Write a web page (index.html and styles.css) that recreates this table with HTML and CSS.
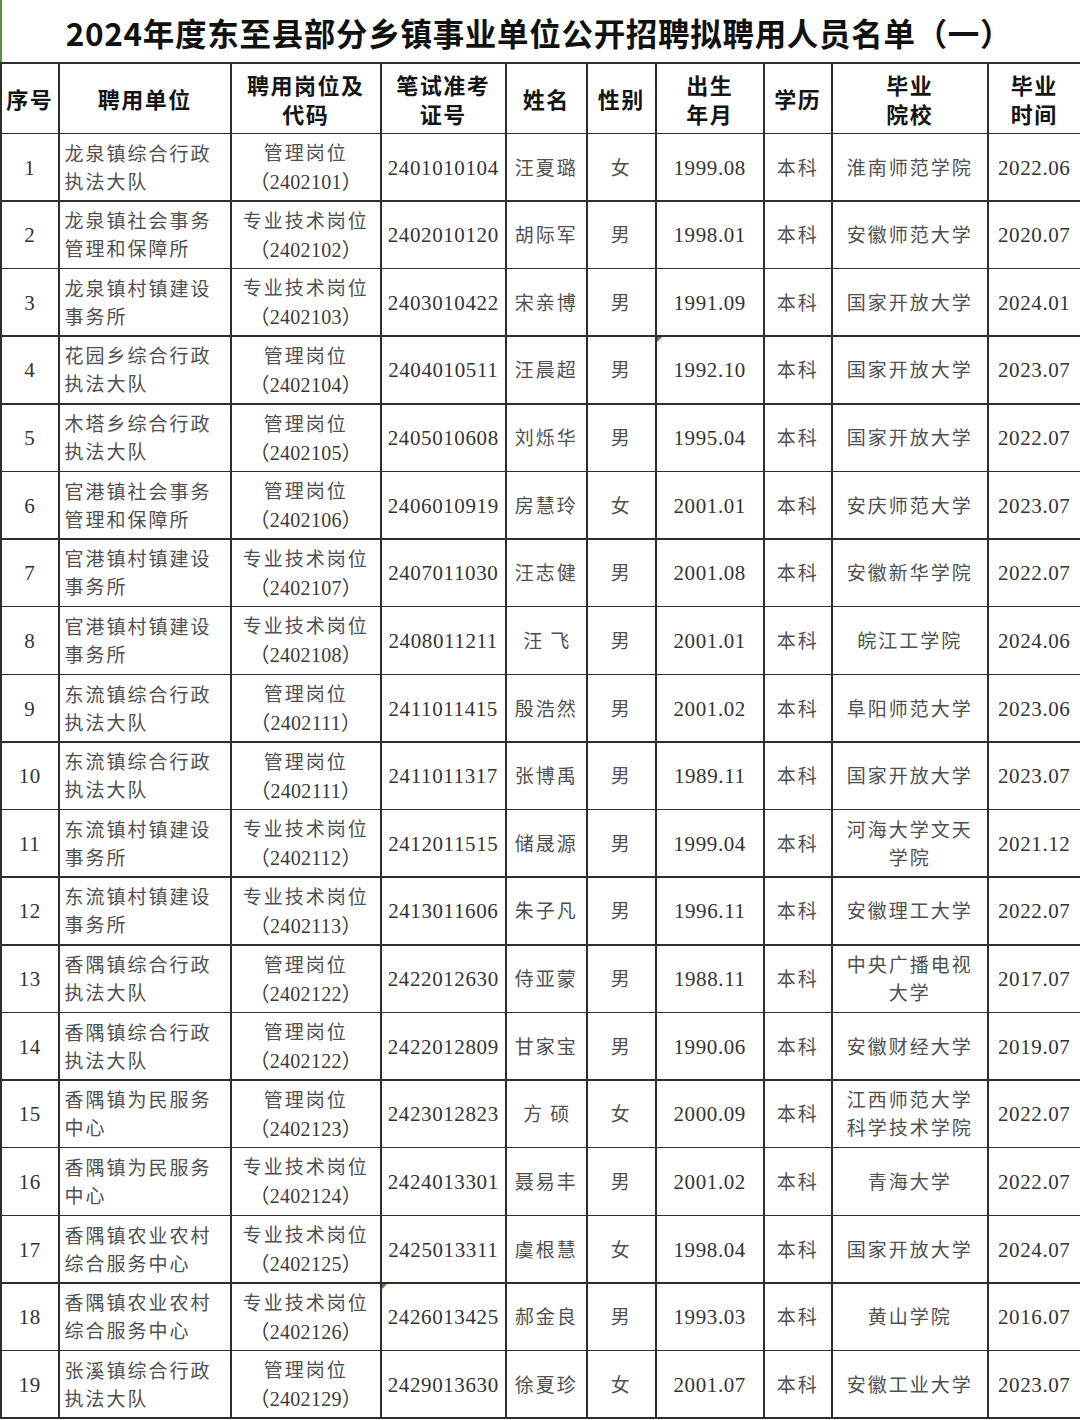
FILE: index.html
```html
<!DOCTYPE html>
<html lang="zh-CN">
<head>
<meta charset="utf-8">
<title>2024年度东至县部分乡镇事业单位公开招聘拟聘用人员名单（一）</title>
<link rel="stylesheet" href="styles.css">
</head>
<body>
<div class="page">
  <div class="title">2024年度东至县部分乡镇事业单位公开招聘拟聘用人员名单（一）</div>
  <div class="grid">
    <div class="h">序号</div>
    <div class="h">聘用单位</div>
    <div class="h">聘用岗位及<br>代码</div>
    <div class="h">笔试准考<br>证号</div>
    <div class="h">姓名</div>
    <div class="h">性别</div>
    <div class="h">出生<br>年月</div>
    <div class="h">学历</div>
    <div class="h">毕业<br>院校</div>
    <div class="h">毕业<br>时间</div>

    <div class="c num">1</div><div class="c unit">龙泉镇综合行政<br>执法大队</div><div class="c pos"><div>管理岗位<br><span class="code">（2402101）</span></div></div><div class="c num">2401010104</div><div class="c">汪夏璐</div><div class="c">女</div><div class="c num">1999.08</div><div class="c">本科</div><div class="c">淮南师范学院</div><div class="c num">2022.06</div>

    <div class="c num">2</div><div class="c unit">龙泉镇社会事务<br>管理和保障所</div><div class="c pos"><div>专业技术岗位<br><span class="code">（2402102）</span></div></div><div class="c num">2402010120</div><div class="c">胡际军</div><div class="c">男</div><div class="c num">1998.01</div><div class="c">本科</div><div class="c">安徽师范大学</div><div class="c num">2020.07</div>

    <div class="c num">3</div><div class="c unit">龙泉镇村镇建设<br>事务所</div><div class="c pos"><div>专业技术岗位<br><span class="code">（2402103）</span></div></div><div class="c num">2403010422</div><div class="c">宋亲博</div><div class="c">男</div><div class="c num">1991.09</div><div class="c">本科</div><div class="c">国家开放大学</div><div class="c num">2024.01</div>

    <div class="c num">4</div><div class="c unit">花园乡综合行政<br>执法大队</div><div class="c pos"><div>管理岗位<br><span class="code">（2402104）</span></div></div><div class="c num">2404010511</div><div class="c">汪晨超</div><div class="c">男</div><div class="c num flag">1992.10</div><div class="c">本科</div><div class="c">国家开放大学</div><div class="c num">2023.07</div>

    <div class="c num">5</div><div class="c unit">木塔乡综合行政<br>执法大队</div><div class="c pos"><div>管理岗位<br><span class="code">（2402105）</span></div></div><div class="c num">2405010608</div><div class="c">刘烁华</div><div class="c">男</div><div class="c num">1995.04</div><div class="c">本科</div><div class="c">国家开放大学</div><div class="c num">2022.07</div>

    <div class="c num">6</div><div class="c unit">官港镇社会事务<br>管理和保障所</div><div class="c pos"><div>管理岗位<br><span class="code">（2402106）</span></div></div><div class="c num">2406010919</div><div class="c">房慧玲</div><div class="c">女</div><div class="c num">2001.01</div><div class="c">本科</div><div class="c">安庆师范大学</div><div class="c num">2023.07</div>

    <div class="c num">7</div><div class="c unit">官港镇村镇建设<br>事务所</div><div class="c pos"><div>专业技术岗位<br><span class="code">（2402107）</span></div></div><div class="c num">2407011030</div><div class="c">汪志健</div><div class="c">男</div><div class="c num">2001.08</div><div class="c">本科</div><div class="c">安徽新华学院</div><div class="c num">2022.07</div>

    <div class="c num">8</div><div class="c unit">官港镇村镇建设<br>事务所</div><div class="c pos"><div>专业技术岗位<br><span class="code">（2402108）</span></div></div><div class="c num">2408011211</div><div class="c two">汪飞</div><div class="c">男</div><div class="c num">2001.01</div><div class="c">本科</div><div class="c">皖江工学院</div><div class="c num">2024.06</div>

    <div class="c num">9</div><div class="c unit">东流镇综合行政<br>执法大队</div><div class="c pos"><div>管理岗位<br><span class="code">（2402111）</span></div></div><div class="c num">2411011415</div><div class="c">殷浩然</div><div class="c">男</div><div class="c num">2001.02</div><div class="c">本科</div><div class="c">阜阳师范大学</div><div class="c num">2023.06</div>

    <div class="c num">10</div><div class="c unit">东流镇综合行政<br>执法大队</div><div class="c pos"><div>管理岗位<br><span class="code">（2402111）</span></div></div><div class="c num">2411011317</div><div class="c">张博禹</div><div class="c">男</div><div class="c num">1989.11</div><div class="c">本科</div><div class="c">国家开放大学</div><div class="c num">2023.07</div>

    <div class="c num">11</div><div class="c unit">东流镇村镇建设<br>事务所</div><div class="c pos"><div>专业技术岗位<br><span class="code">（2402112）</span></div></div><div class="c num">2412011515</div><div class="c">储晟源</div><div class="c">男</div><div class="c num">1999.04</div><div class="c">本科</div><div class="c">河海大学文天<br>学院</div><div class="c num">2021.12</div>

    <div class="c num">12</div><div class="c unit">东流镇村镇建设<br>事务所</div><div class="c pos"><div>专业技术岗位<br><span class="code">（2402113）</span></div></div><div class="c num">2413011606</div><div class="c">朱子凡</div><div class="c">男</div><div class="c num">1996.11</div><div class="c">本科</div><div class="c">安徽理工大学</div><div class="c num">2022.07</div>

    <div class="c num">13</div><div class="c unit">香隅镇综合行政<br>执法大队</div><div class="c pos"><div>管理岗位<br><span class="code">（2402122）</span></div></div><div class="c num">2422012630</div><div class="c">侍亚蒙</div><div class="c">男</div><div class="c num">1988.11</div><div class="c">本科</div><div class="c">中央广播电视<br>大学</div><div class="c num">2017.07</div>

    <div class="c num">14</div><div class="c unit">香隅镇综合行政<br>执法大队</div><div class="c pos"><div>管理岗位<br><span class="code">（2402122）</span></div></div><div class="c num">2422012809</div><div class="c">甘家宝</div><div class="c">男</div><div class="c num">1990.06</div><div class="c">本科</div><div class="c">安徽财经大学</div><div class="c num">2019.07</div>

    <div class="c num">15</div><div class="c unit">香隅镇为民服务<br>中心</div><div class="c pos"><div>管理岗位<br><span class="code">（2402123）</span></div></div><div class="c num">2423012823</div><div class="c two">方硕</div><div class="c">女</div><div class="c num">2000.09</div><div class="c">本科</div><div class="c">江西师范大学<br>科学技术学院</div><div class="c num">2022.07</div>

    <div class="c num">16</div><div class="c unit">香隅镇为民服务<br>中心</div><div class="c pos"><div>专业技术岗位<br><span class="code">（2402124）</span></div></div><div class="c num">2424013301</div><div class="c">聂易丰</div><div class="c">男</div><div class="c num">2001.02</div><div class="c">本科</div><div class="c">青海大学</div><div class="c num">2022.07</div>

    <div class="c num">17</div><div class="c unit">香隅镇农业农村<br>综合服务中心</div><div class="c pos"><div>专业技术岗位<br><span class="code">（2402125）</span></div></div><div class="c num">2425013311</div><div class="c">虞根慧</div><div class="c">女</div><div class="c num">1998.04</div><div class="c">本科</div><div class="c">国家开放大学</div><div class="c num">2024.07</div>

    <div class="c num">18</div><div class="c unit">香隅镇农业农村<br>综合服务中心</div><div class="c pos"><div>专业技术岗位<br><span class="code">（2402126）</span></div></div><div class="c num flag">2426013425</div><div class="c">郝金良</div><div class="c">男</div><div class="c num">1993.03</div><div class="c">本科</div><div class="c">黄山学院</div><div class="c num">2016.07</div>

    <div class="c num">19</div><div class="c unit">张溪镇综合行政<br>执法大队</div><div class="c pos"><div>管理岗位<br><span class="code">（2402129）</span></div></div><div class="c num">2429013630</div><div class="c">徐夏珍</div><div class="c">女</div><div class="c num">2001.07</div><div class="c">本科</div><div class="c">安徽工业大学</div><div class="c num">2023.07</div>
  </div>
</div>
</body>
</html>
```

FILE: styles.css
```css
html, body {
  margin: 0;
  padding: 0;
  background: #ffffff;
}

.page {
  width: 1080px;
  height: 1420px;
  overflow: hidden;
  background: #ffffff;
}

.title {
  height: 62px;
  box-sizing: border-box;
  border-left: 2px solid #5d8f3e;
  padding-top: 2px;
  font-family: "Noto Sans CJK SC", "Noto Sans", sans-serif;
  font-weight: 700;
  font-size: 31.5px;
  line-height: 60px;
  color: #111111;
  text-align: center;
  padding-right: 4px;
  letter-spacing: 0.7px;
}

.grid {
  display: grid;
  grid-template-columns: 56.5px 170.5px 148.5px 123.5px 79.5px 67.5px 106.5px 66.5px 154.5px 1fr;
  grid-template-rows: 69px repeat(19, 66.13px);
  gap: 1.5px;
  padding: 1.5px 0 1.5px 1.5px;
  background: #2e2e2e;
}

.h, .c {
  background: #ffffff;
  display: flex;
  align-items: center;
  justify-content: center;
  text-align: center;
  position: relative;
}

.h {
  font-family: "Noto Sans CJK SC", "Noto Sans", sans-serif;
  font-weight: 700;
  font-size: 22px;
  line-height: 29px;
  letter-spacing: 1.5px;
  color: #151515;
  padding-top: 1px;
}

.c {
  font-family: "Liberation Serif", "Noto Sans CJK SC", serif;
  font-size: 19px;
  line-height: 28px;
  letter-spacing: 2px;
  color: #505050;
  padding-top: 3px;
  box-sizing: border-box;
}

.c.num {
  font-size: 21px;
  letter-spacing: 0.6px;
  color: #333333;
  padding-top: 1px;
}

.c.unit {
  justify-content: flex-start;
  text-align: left;
  padding-left: 5px;
}

.code {
  font-size: 20px;
  letter-spacing: 0.3px;
  color: #3a3a3a;
}

.c.two {
  letter-spacing: 8px;
  padding-left: 8px;
}

.flag::before {
  content: "";
  position: absolute;
  left: 0;
  top: 0;
  width: 0;
  height: 0;
  border-top: 5px solid #3b8a2c;
  border-right: 5px solid transparent;
}
```
